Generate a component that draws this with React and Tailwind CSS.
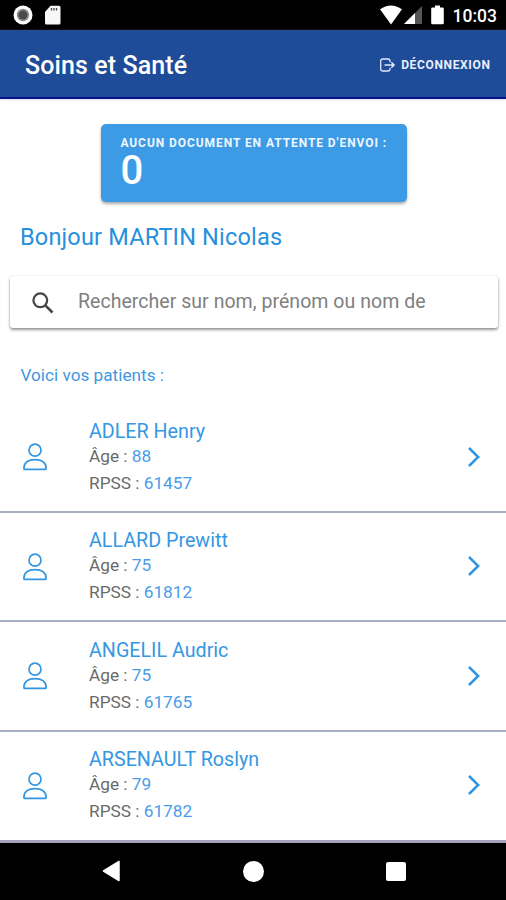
const patients = [
  { name: 'ADLER Henry', age: 88, rpss: 61457 },
  { name: 'ALLARD Prewitt', age: 75, rpss: 61812 },
  { name: 'ANGELIL Audric', age: 75, rpss: 61765 },
  { name: 'ARSENAULT Roslyn', age: 79, rpss: 61782 },
];

function StatusBar() {
  return (
    <div className="flex h-[29.5px] shrink-0 items-center justify-between bg-black pl-[13px] pr-[9px] pt-px">
      <div className="flex items-center gap-[12px]">
        <svg width="20" height="20" viewBox="0 0 20 20">
          <circle cx="10" cy="10" r="9.5" fill="#fff" />
          <circle cx="10" cy="10" r="6.200" fill="#8c8c8c" />
          <circle cx="10" cy="10" r="4.500" fill="#4a4a4a" />
        </svg>
        <svg width="16" height="20" viewBox="0 0 16 20">
          <path d="M5.500 .8H14a1.500 1.500 0 0 1 1.500 1.500V18a1.500 1.500 0 0 1-1.500 1.500H1.500A1.500 1.500 0 0 1 0 18V7Z" fill="#f7f7f7" />
          <path d="M6.500 3v2.500M9 3v2.500M11.500 3v2.500" stroke="#444" strokeWidth="1.300" />
        </svg>
      </div>
      <div className="flex items-center">
        <svg width="22" height="20" viewBox="0 0 22 20">
          <path d="M0 4.300Q11-3.300 22 4.300L11 19.500Z" fill="#fff" />
        </svg>
        <svg className="ml-[2px]" width="18" height="20" viewBox="0 0 18 20">
          <path d="M18 1V19H0Z" fill="#555" />
          <path d="M11 8V19H0Z" fill="#fff" />
        </svg>
        <svg className="ml-[9px]" width="13" height="20" viewBox="0 0 13 20">
          <path d="M4 .5h5v2h2.500A1.300 1.300 0 0 1 12.800 3.800V18a1.300 1.300 0 0 1-1.300 1.300h-10A1.300 1.300 0 0 1 .2 18V3.800A1.300 1.300 0 0 1 1.500 2.500H4Z" fill="#fff" />
        </svg>
        <span className="ml-[9px] pt-[2px] text-[17.500px] font-medium leading-5 text-white">10:03</span>
      </div>
    </div>
  );
}

function Header() {
  return (
    <header className="flex h-[69.5px] shrink-0 items-center justify-between border-b-2 border-[#04128c] bg-[#1f4c99] pl-[25px] pr-[15.5px] pt-[3px] text-white shadow-[0_1px_2px_#e0d8ea]">
      <h1 className="whitespace-nowrap pt-[2px] text-[25px] font-medium leading-8 tracking-[0.100px]">Soins et Santé</h1>
      <button className="flex items-center gap-[6px]">
        <svg width="15" height="14" viewBox="0 0 15 14" fill="none" stroke="#e4ecfa" strokeWidth="1.300" strokeLinecap="round" strokeLinejoin="round">
          <path d="M10 3.700V2.800A1.800 1.800 0 0 0 8.200 1H2.500A1.800 1.800 0 0 0 .7 2.800v8.400A1.800 1.800 0 0 0 2.500 13h5.700A1.800 1.800 0 0 0 10 11.200v-.9M5 7h9M11.600 4.600 14.200 7l-2.600 2.400" />
        </svg>
        <span className="whitespace-nowrap text-[12px] font-bold leading-4 tracking-[0.650px] text-[#e9effb]">DÉCONNEXION</span>
      </button>
    </header>
  );
}

function PatientRow({ name, age, rpss }) {
  return (
    <li className="flex h-[109.500px] items-center border-b-2 border-[#a6aec9] pl-[23px] pr-[25.500px] last:h-[111px] last:border-b-[3px] last:border-[#a3a3bd] last:pb-[0.500px]">
      <svg className="mt-px shrink-0" width="24" height="28" viewBox="0 0 24 28" fill="none" stroke="#3296e2" strokeWidth="1.700" strokeLinejoin="round">
        <circle cx="12" cy="7.200" r="6" />
        <path d="M.9 25.400C.9 19.500 5.500 16.600 12 16.600s11.100 2.900 11.100 8.800q0 1-1 1H1.900q-1 0-1-1Z" />
      </svg>
      <div className="ml-[42px] flex-1 whitespace-nowrap pt-[2px] text-[17.250px] text-[#6a6a6a]">
        <h2 className="text-[19.700px] leading-[25px] text-[#3597e3]">{name}</h2>
        <p className="-mt-px leading-[27px]">Âge : <span className="text-[#489cea]">{age}</span></p>
        <p className="leading-[27px]">RPSS : <span className="text-[#489cea]">{rpss}</span></p>
      </div>
      <svg className="shrink-0" width="14" height="22" viewBox="0 0 14 22" fill="none" stroke="#2f94e2" strokeWidth="2.500">
        <path d="m2 2 9.200 9L2 20" />
      </svg>
    </li>
  );
}

function NavigationBar() {
  return (
    <nav className="flex h-[57.500px] shrink-0 items-center bg-black pl-[102px]">
      <svg width="18" height="22" viewBox="0 0 18 22"><path d="M17 1.500v19L1.500 11Z" fill="#fff" stroke="#fff" strokeWidth="1.500" strokeLinejoin="round" /></svg>
      <span className="ml-[123px] size-[21px] rounded-full bg-white" />
      <span className="ml-[122px] size-[19.500px] rounded-[2px] bg-white" />
    </nav>
  );
}

export default function App() {
  return (
    <div className="flex h-[900px] w-[506px] flex-col overflow-hidden bg-white font-['Roboto',sans-serif]">
      <StatusBar />
      <Header />
      <main className="flex min-h-0 flex-1 flex-col overflow-hidden">
        <section className="ml-[101.400px] mt-[25px] h-[78px] w-[305.300px] shrink-0 rounded-[5px] bg-[#3d9be6] pl-[19px] pt-[11px] text-white shadow-[0_2px_3px_#0005]">
          <p className="whitespace-nowrap text-[12px] font-bold leading-4 tracking-[0.930px] text-[#eef6ff]">AUCUN DOCUMENT EN ATTENTE D'ENVOI :</p>
          <p className="text-[40px] font-medium leading-[39px]">0</p>
        </section>
        <p className="ml-[20px] mt-[20px] shrink-0 whitespace-nowrap text-[23.500px] leading-[30px] tracking-[0.180px] text-[#278fdd]">Bonjour MARTIN Nicolas</p>
        <div className="ml-[10.400px] mt-[24px] flex h-[51.500px] w-[487.500px] shrink-0 items-center rounded-[3px] bg-white pl-[21.600px] shadow-[0_2px_3px_#0006,0_0_2px_#0002]">
          <svg className="mt-[2px]" width="22" height="22" viewBox="0 0 22 22" fill="none" stroke="#454545" strokeWidth="2.200">
            <circle cx="8.300" cy="8.300" r="6.900" />
            <path d="m13.300 13.300 7.200 7.200" strokeWidth="2.600" />
          </svg>
          <span className="ml-[24px] whitespace-nowrap text-[19.500px] leading-7 tracking-[0.040px] text-[#808080]">Rechercher sur nom, prénom ou nom de</span>
        </div>
        <p className="ml-[20.500px] mt-[35px] shrink-0 text-[17.200px] leading-6 text-[#3f98e0]">Voici vos patients :</p>
        <ul className="mt-[16.500px] shrink-0">
          {patients.map((patient) => <PatientRow key={patient.rpss} {...patient} />)}
        </ul>
      </main>
      <NavigationBar />
    </div>
  );
}
